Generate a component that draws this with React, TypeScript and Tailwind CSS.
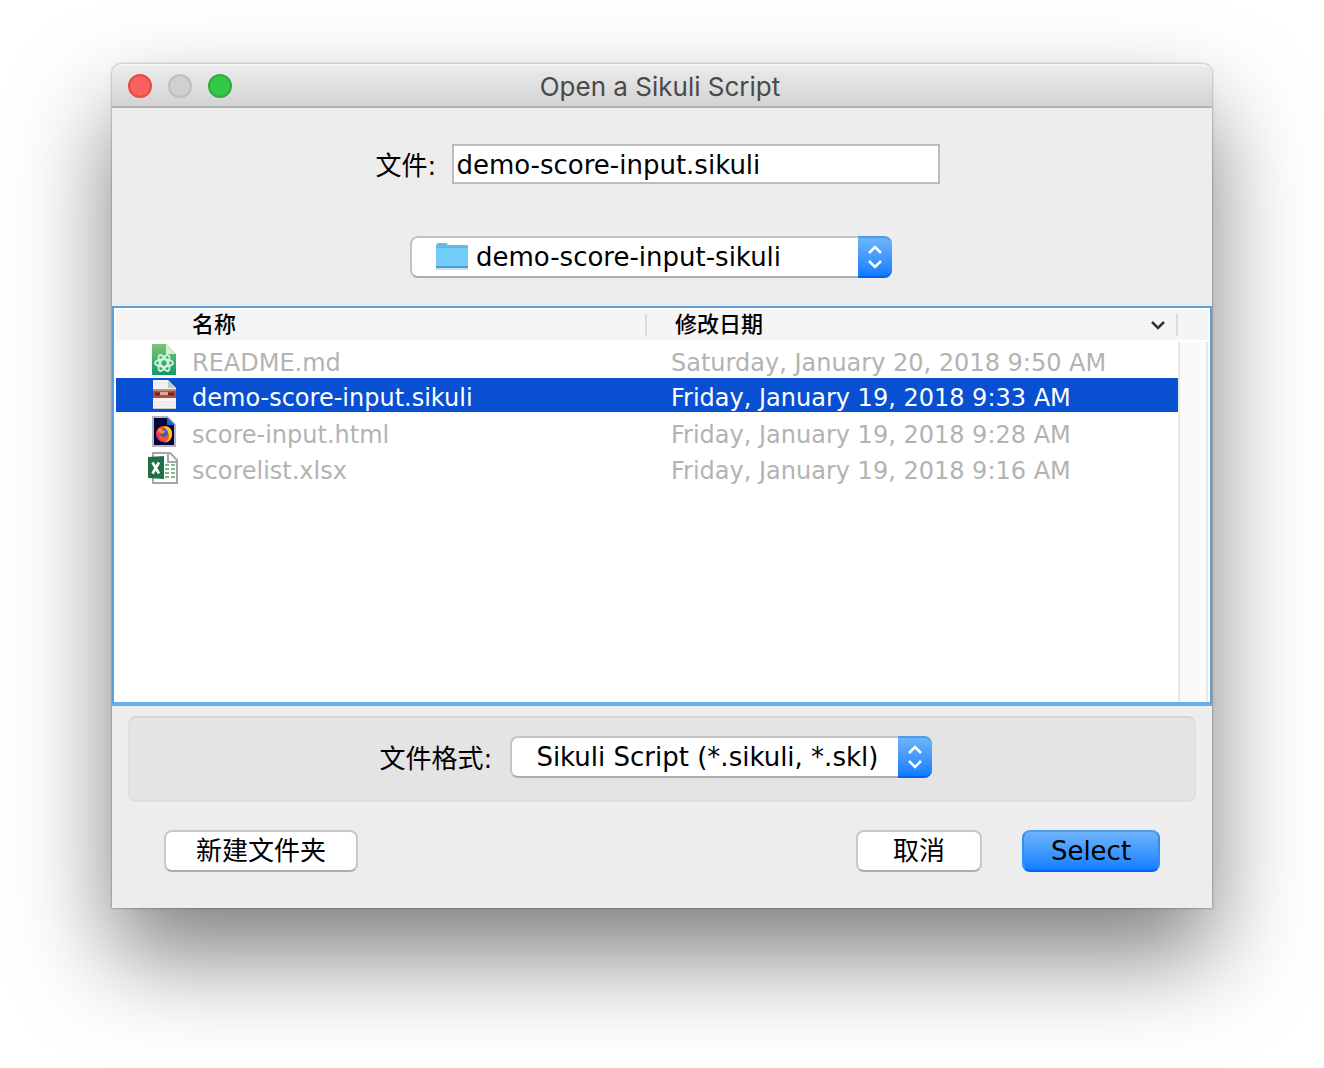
import { useState, type ReactNode } from "react";

type FileKind = "markdown" | "sikuli" | "html" | "excel";

type FileEntry = {
  name: string;
  date: string;
  kind: FileKind;
};

const files: FileEntry[] = [
  { name: "README.md", date: "Saturday, January 20, 2018 9:50 AM", kind: "markdown" },
  { name: "demo-score-input.sikuli", date: "Friday, January 19, 2018 9:33 AM", kind: "sikuli" },
  { name: "score-input.html", date: "Friday, January 19, 2018 9:28 AM", kind: "html" },
  { name: "scorelist.xlsx", date: "Friday, January 19, 2018 9:16 AM", kind: "excel" },
];

function FileIcon({ kind }: { kind: FileKind }) {
  return (
    <svg viewBox="0 0 32 32" className="size-8 shrink-0" aria-hidden="true">
      {kind === "markdown" && (
        <>
          <defs>
            <linearGradient id="md" x1="0" y1="0" x2="0" y2="1">
              <stop offset="0" stopColor="#7cc576" />
              <stop offset="1" stopColor="#129a63" />
            </linearGradient>
          </defs>
          <path d="M4 0h14l10 10v21H4z" fill="url(#md)" />
          <path d="M18 0l10 10H18z" fill="#d5efcf" />
          <g fill="none" stroke="#d6f2e0" strokeWidth="1.800">
            <ellipse cx="16" cy="19" rx="9" ry="3.600" transform="rotate(0 16 19)" />
            <ellipse cx="16" cy="19" rx="9" ry="3.600" transform="rotate(60 16 19)" />
            <ellipse cx="16" cy="19" rx="9" ry="3.600" transform="rotate(120 16 19)" />
          </g>
        </>
      )}
      {kind === "sikuli" && (
        <>
          <path d="M5 1h15l8 8v21H5z" fill="#f3f3f3" />
          <path d="M20 1l8 8h-8z" fill="#c4c8d2" />
          <path d="M6 4h12M6 7h12M6 23h21M6 26h21" stroke="#e6e6e6" />
          <path d="M5 10h23v9H5z" fill="#b0503f" />
          <path d="M5 10h23v2H5z" fill="#c98a7e" />
          <path d="M7 15h6M20 15h6" stroke="#7c2418" strokeWidth="3" />
          <path d="M12 14.500h8" stroke="#d8aaa2" strokeWidth="3" />
          <path d="M5 29.500h23" stroke="#c9c9c9" />
        </>
      )}
      {kind === "html" && (
        <>
          <path d="M5 1h14l8 8v21H5z" fill="#05063b" stroke="#b4b5bd" strokeWidth="2" />
          <path d="M19 1l8 8h-8z" fill="#1c63dc" />
          <circle cx="16" cy="18" r="8" fill="#f5532c" />
          <path d="M16 10c6 0 8.500 4 8 9s-4 7.500-8 7.500c3-1 5-3 5-6s-2-6-5-10.500z" fill="#ffc629" />
          <path d="M8 16c0 6 4 10 9 10-5-1-6-4-6-7z" fill="#e4247c" />
          <circle cx="16" cy="17" r="3.800" fill="#2c5fc9" />
          <path d="M10 13c2-1 4 0 5 1.500l3 1-3 2c-2 1-4 0-5-4.500z" fill="#ff8a25" />
        </>
      )}
      {kind === "excel" && (
        <>
          <path d="M5 1h17l7 7v23H5z" fill="#fff" stroke="#a6a6a6" strokeWidth="2" />
          <path d="M20 1v9h9" fill="#fff" stroke="#a6a6a6" strokeWidth="2" />
          <path
            d="M17 13h4M23 13h4M17 17h4M23 17h4M17 21h4M23 21h4M17 25h4M23 25h4"
            stroke="#83b896"
            strokeWidth="2"
          />
          <path d="M0 5l16-1v23L0 26z" fill="#1e7145" />
          <path d="M4.500 10.500l6.500 11M11 10.500l-6.500 11" stroke="#fff" strokeWidth="2.600" />
        </>
      )}
    </svg>
  );
}

function FolderIcon() {
  return (
    <svg viewBox="0 0 32 30" className="h-[30px] w-8" aria-hidden="true">
      <path d="M1 3q0-1 1-1h8q1 0 2 2h19q1 0 1 1v22q0 1-1 1H1q-1 0-1-1V4z" fill="#68bde4" />
      <path d="M0 7h32v18H0z" fill="#72cdf8" />
      <path d="M0 6.500h32" stroke="#62b5d9" />
      <path d="M0 26h32" stroke="#4a9fca" strokeWidth="2" />
      <path d="M0 28h32" stroke="#c9dfe9" strokeWidth="2" />
    </svg>
  );
}

function PopupMenu({ id, value, icon, className }: { id: string; value: string; icon?: ReactNode; className: string }) {
  return (
    <div className={`relative ${className}`}>
      {icon && <span className="pointer-events-none absolute top-[5px] left-[26px]">{icon}</span>}
      <select
        id={id}
        aria-label={icon ? value : undefined}
        className={`h-[42px] w-full appearance-none rounded-lg border-2 border-[#c4c4c4] border-b-[#adadad] bg-white pr-9 text-black ${icon ? "pl-16" : "pl-6"}`}
      >
        <option>{value}</option>
      </select>
      <span className="pointer-events-none absolute inset-y-0 right-0 flex w-[34px] items-center justify-center rounded-r-lg border-t-2 border-b-2 border-t-[#4f9bea] border-b-[#0463f5] bg-linear-to-b from-[#6cb3fa] to-[#087dff]">
        <svg viewBox="0 0 16 24" className="h-6 w-4" fill="none" stroke="#fff" strokeWidth="2.500" aria-hidden="true">
          <path d="M2 8l6-6 6 6M2 16l6 6 6-6" />
        </svg>
      </span>
    </div>
  );
}

export default function App() {
  const [fileName, setFileName] = useState("demo-score-input.sikuli");
  const [selected, setSelected] = useState("demo-score-input.sikuli");

  const pickFile = (file: FileEntry) => {
    if (file.kind !== "sikuli") return;
    setSelected(file.name);
    setFileName(file.name);
  };

  return (
    <main className="min-h-screen bg-white px-28 pt-16 pb-40 font-['DejaVu_Sans','Noto_Sans_CJK_SC',sans-serif] text-[26px] leading-8 text-black">
      <div className="rounded-t-[10px] bg-[#ededed] shadow-[0_0_2px_1px_rgba(0,0,0,0.2),0_48px_96px_rgba(0,0,0,0.5)]">
        <header className="relative flex h-11 items-center justify-center rounded-t-[10px] border-t-2 border-b-2 border-t-[#f5f5f5] border-b-[#b1b1b1] bg-linear-to-b from-[#ebebeb] to-[#d3d3d3]">
          <div className="absolute left-4 flex gap-4">
            <button aria-label="Close" className="size-6 rounded-full border-2 border-[#e24b47] bg-[#fc605c]" />
            <button aria-label="Minimize" className="size-6 rounded-full border-2 border-[#bfbfbf] bg-[#d0d0d0]" />
            <button aria-label="Zoom" className="size-6 rounded-full border-2 border-[#2dac3c] bg-[#34c84a]" />
          </div>
          <h1 className="pt-[2px] pr-1 font-['Inter',sans-serif] text-[26px] text-[#4a4a4a]">Open a Sikuli Script</h1>
        </header>

        <div className="flex items-center justify-center gap-4 pt-9 pr-2">
          <label htmlFor="file" className="pt-1">文件:</label>
          <input
            id="file"
            value={fileName}
            onChange={(e) => setFileName(e.target.value)}
            className="h-10 w-[488px] border-2 border-[#bdbdbd] bg-white px-[2px] pt-[2px] outline-none"
          />
        </div>

        <div className="flex justify-center pt-[52px] pr-[22px] pb-7">
          <PopupMenu id="folder" value="demo-score-input-sikuli" icon={<FolderIcon />} className="w-[482px]" />
        </div>

        <div className="flex min-h-[400px] border-2 border-b-4 border-[#5b9fd6] border-b-[#65aeef] bg-white px-[2px] pt-[2px] text-[24px]">
          <div className="flex-1">
            <table className="w-full table-fixed border-separate border-spacing-0 text-left">
              <thead className="text-[22px] leading-7">
                <tr>
                  <th className="w-1/2 p-0 pb-[2px] font-medium">
                    <div className="flex h-[30px] items-center bg-[#f5f5f5]">
                      <span className="flex-1 pl-[76px]">名称</span>
                      <span className="h-[22px] w-[2px] bg-[#dcdcdc]" />
                    </div>
                  </th>
                  <th className="p-0 pb-[2px] font-medium">
                    <div className="flex h-[30px] items-center bg-[#f5f5f5]">
                      <span className="flex-1 pl-7">修改日期</span>
                      <svg viewBox="0 0 16 10" className="mr-[10px] h-[10px] w-4" fill="none" stroke="#333" strokeWidth="2.500" aria-hidden="true">
                        <path d="M2 2l6 6 6-6" />
                      </svg>
                      <span className="h-[22px] w-[2px] bg-[#dcdcdc]" />
                    </div>
                  </th>
                </tr>
              </thead>
              <tbody className="leading-7">
                {files.map((file) => (
                  <tr
                    key={file.name}
                    onClick={() => pickFile(file)}
                    className={
                      file.name === selected
                        ? "bg-[#084fd1] text-white *:border-b-2 *:border-white"
                        : "text-[#b3b3b3]"
                    }
                  >
                    <td className="h-9 p-0">
                      <div className="flex items-center gap-3 pl-8">
                        <FileIcon kind={file.kind} />
                        <span className="pt-[6px]">{file.name}</span>
                      </div>
                    </td>
                    <td className="h-9 p-0 pt-[6px] pl-6 whitespace-nowrap">{file.date}</td>
                  </tr>
                ))}
              </tbody>
            </table>
          </div>
          <div className="flex w-[30px] flex-col">
            <div className="mb-[2px] h-[30px] bg-[#f5f5f5]" />
            <div className="flex-1 border-x-2 border-[#e8e8e8] bg-[#fafafa]" />
          </div>
        </div>

        <div className="mx-4 mt-[10px] flex items-center justify-center gap-[18px] rounded-lg border-2 border-[#dfdfdf] border-t-[#d5d5d5] bg-[#e4e4e4] pt-[18px] pr-3 pb-[22px]">
          <label htmlFor="format" className="pt-1">文件格式:</label>
          <PopupMenu id="format" value="Sikuli Script (*.sikuli, *.skl)" className="w-[422px]" />
        </div>

        <footer className="flex items-center gap-10 px-[52px] pt-7 pb-9">
          <button className="mr-auto h-[42px] rounded-lg border-2 border-[#c8c8c8] border-b-[#adadad] bg-white px-[30px]">
            新建文件夹
          </button>
          <button className="h-[42px] rounded-lg border-2 border-[#c8c8c8] border-b-[#adadad] bg-white px-[35px]">
            取消
          </button>
          <button className="h-[42px] w-[138px] rounded-lg border-2 border-[#4f9bea] border-x-[#2d8cf5] border-b-[#0463f5] bg-linear-to-b from-[#6cb3fa] to-[#087dff]">
            Select
          </button>
        </footer>
      </div>
    </main>
  );
}
